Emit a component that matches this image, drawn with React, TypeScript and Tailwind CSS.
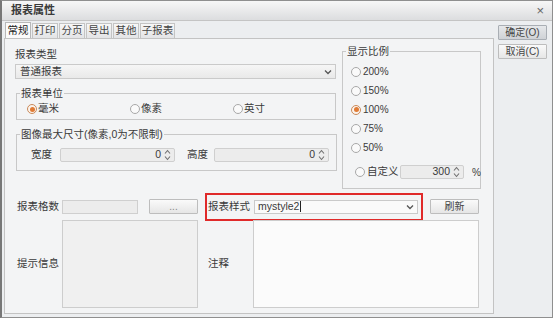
import React from 'react';

const font = "font-['Liberation_Sans','Noto_Sans_CJK_SC',sans-serif]";

function Radio({ checked }: { checked?: boolean }) {
  return (
    <span
      className={`w-[10px] h-[10px] rounded-full border flex items-center justify-center shrink-0 ${
        checked ? 'border-[#c98a5a] bg-[#fbf3ec]' : 'border-[#a8a8a8] bg-[#fafafa]'
      }`}
    >
      {checked && <span className="w-[5px] h-[5px] rounded-full bg-[#e07b35]" />}
    </span>
  );
}

function Spinner() {
  return (
    <svg width="7" height="12" viewBox="0 0 7 12" className="mx-[3px] shrink-0">
      <path d="M1 4.5 L3.5 1.5 L6 4.5" fill="none" stroke="#707070" strokeWidth="1.1" />
      <path d="M1 7.5 L3.5 10.5 L6 7.5" fill="none" stroke="#707070" strokeWidth="1.1" />
    </svg>
  );
}

function SpinInput({ value, w }: { value: string; w: string }) {
  return (
    <div className={`${w} h-[14px] shrink-0 flex items-center justify-end border border-[#cfcfcf] bg-[#ececec] rounded-[2px] text-[10.5px] text-[#3a3a3a]`}>
      <span>{value}</span>
      <Spinner />
    </div>
  );
}

function Chevron() {
  return (
    <svg width="8" height="6" viewBox="0 0 8 6" className="shrink-0">
      <path d="M1 1.5 L4 4.5 L7 1.5" fill="none" stroke="#555" strokeWidth="1.3" />
    </svg>
  );
}

function Btn({ children, w, dark }: { children: React.ReactNode; w: string; dark?: boolean }) {
  return (
    <div
      className={`${w} h-[15px] flex items-center justify-center border text-[10px] text-[#444] rounded-[1px] ${
        dark
          ? 'border-[#a9aeb4] bg-gradient-to-b from-[#e6e8ea] to-[#cfd2d6]'
          : 'border-[#bdbdbd] bg-gradient-to-b from-[#fafafa] to-[#e6e6e6]'
      }`}
    >
      {children}
    </div>
  );
}

const tabs = ['常规', '打印', '分页', '导出', '其他', '子报表'];
const scales = ['200%', '150%', '100%', '75%', '50%'];

export default function App() {
  return (
    <div className={`${font} w-[553px] h-[318px] bg-[#eceef0] border border-[#8f8f8f] border-l-2 border-l-[#777] flex flex-col overflow-hidden text-[11px] text-[#3a3a3a]`}>
      <div className="h-[20px] shrink-0 flex items-center justify-between pl-[9px] pr-[8px] bg-gradient-to-b from-[#f7f7f7] to-[#dcdddf] border-b border-[#c4c4c4]">
        <span className="font-bold text-[11px] text-[#3a3a3a]">报表属性</span>
        <span className="text-[13px] text-[#666] leading-none">×</span>
      </div>

      <div className="flex flex-1 pl-[2px]">
        <div className="w-[490px] flex flex-col">
          <div className="h-[16px] mt-[1px] flex items-end gap-[1px] pl-[1px]">
            {tabs.map((t, i) => (
              <div
                key={t}
                className={`${t === '子报表' ? 'w-[35px]' : 'w-[26px]'} flex items-center justify-center border border-b-0 text-[10.5px] ${
                  i === 0
                    ? 'h-[16px] bg-[#fbfbfb] border-[#b8b8b8] text-[#222]'
                    : 'h-[15px] bg-gradient-to-b from-[#f7f7f7] to-[#e3e4e6] border-[#c4c4c4] text-[#444]'
                }`}
              >
                {t}
              </div>
            ))}
          </div>

          <div className="h-[276px] border border-[#c3c3c3] bg-[#f3f4f5] pl-[10px] pt-[6px]">
            <div className="flex">
              <div className="w-[321px] shrink-0 flex flex-col">
                <div className="mt-[3px] h-[13px] leading-[13px] text-[10.5px]">报表类型</div>
                <div className="mt-[3px] h-[15px] flex items-center justify-between border border-[#cacaca] bg-gradient-to-b from-[#f6f6f6] to-[#e9e9e9] pl-[4px] pr-[3px] text-[10.5px]">
                  <span>普通报表</span>
                  <Chevron />
                </div>

                <fieldset className="mt-[8px] border border-[#c8c8c8] ml-[1px] px-[10px] pt-[3px] pb-[3px]">
                  <legend className="ml-[-7px] px-[1px] h-[12px] leading-[12px] text-[10.5px]">报表单位</legend>
                  <div className="h-[14px] flex items-center text-[10.5px]">
                    <div className="w-[103px] flex items-center gap-[1px]"><Radio checked /><span>毫米</span></div>
                    <div className="w-[103px] flex items-center gap-[1px]"><Radio /><span>像素</span></div>
                    <div className="flex items-center gap-[1px]"><Radio /><span>英寸</span></div>
                  </div>
                </fieldset>

                <fieldset className="mt-[8px] border border-[#c8c8c8] ml-[1px] pl-[14px] pr-[7px] pt-[8px] pb-[8px]">
                  <legend className="ml-[-11px] px-[1px] h-[12px] leading-[12px] text-[10.5px]">图像最大尺寸(像素,0为不限制)</legend>
                  <div className="h-[14px] flex items-center text-[10.5px]">
                    <span className="w-[29px]">宽度</span>
                    <SpinInput value="0" w="w-[115px]" />
                    <span className="ml-[12px] w-[27px]">高度</span>
                    <SpinInput value="0" w="w-[115px]" />
                  </div>
                </fieldset>
              </div>

              <fieldset className="ml-[6px] w-[139px] min-w-0 border border-[#c8c8c8] pl-[8px] pt-[5px] pb-[9px]">
                <legend className="ml-[-5px] px-[1px] h-[12px] leading-[12px] text-[10.5px]">显示比例</legend>
                {scales.map((s) => (
                  <div key={s} className="h-[19px] flex items-center gap-[2px] text-[10px]">
                    <Radio checked={s === '100%'} />
                    <span>{s}</span>
                  </div>
                ))}
                <div className="mt-[8px] h-[14px] flex items-center text-[10.5px] pl-[4px] whitespace-nowrap">
                  <Radio />
                  <span className="ml-[2px] w-[33px] shrink-0">自定义</span>
                  <SpinInput value="300" w="w-[64px]" />
                  <span className="ml-[8px] text-[10px]">%</span>
                </div>
              </fieldset>
            </div>

            <div className="flex mt-[10px]">
              <div className="ml-[2px] w-[181px] flex flex-col">
                <div className="h-[15px] flex items-center">
                  <span className="w-[45px] text-[10.5px]">报表格数</span>
                  <div className="w-[76px] h-[14px] border border-[#cfcfcf] bg-[#ececec]" />
                  <div className="ml-[11px]">
                    <Btn w="w-[49px]">
                      <span className="text-[#888] leading-none">...</span>
                    </Btn>
                  </div>
                </div>
                <div className="mt-[6px] h-[88px] flex items-center">
                  <span className="w-[45px] text-[10.5px]">提示信息</span>
                  <div className="w-[136px] h-[88px] border border-[#cdcdcd] bg-[#f0f0f0]" />
                </div>
              </div>

              <div className="ml-[7px] w-[274px] flex flex-col">
                <div className="h-[15px] flex items-center">
                  <div className="w-[218px] h-[28px] shrink-0 border-2 border-[#e02a2a] flex items-center pl-[1px] pr-[3px]">
                    <span className="w-[46px] text-[10.5px]">报表样式</span>
                    <div className="flex-1 h-[14px] flex items-center justify-between border border-[#cacaca] bg-[#fafafa] pl-[3px] pr-[3px] text-[10.5px]">
                      <span className="flex items-center">
                        mystyle2<span className="w-[1px] h-[11px] bg-[#222] ml-[1px]" />
                      </span>
                      <Chevron />
                    </div>
                  </div>
                  <div className="ml-[7px]">
                    <Btn w="w-[49px]">刷新</Btn>
                  </div>
                </div>
                <div className="mt-[6px] h-[88px] flex items-center">
                  <span className="w-[48px] pl-[3px] text-[10.5px]">注释</span>
                  <div className="w-[226px] h-[88px] border border-[#cdcdcd] bg-[#fbfbfb]" />
                </div>
              </div>
            </div>
          </div>
        </div>

        <div className="ml-[4px] pt-[4px] flex flex-col gap-[4px]">
          <Btn w="w-[49px]" dark>确定(O)</Btn>
          <Btn w="w-[49px]">取消(C)</Btn>
        </div>
      </div>
    </div>
  );
}
